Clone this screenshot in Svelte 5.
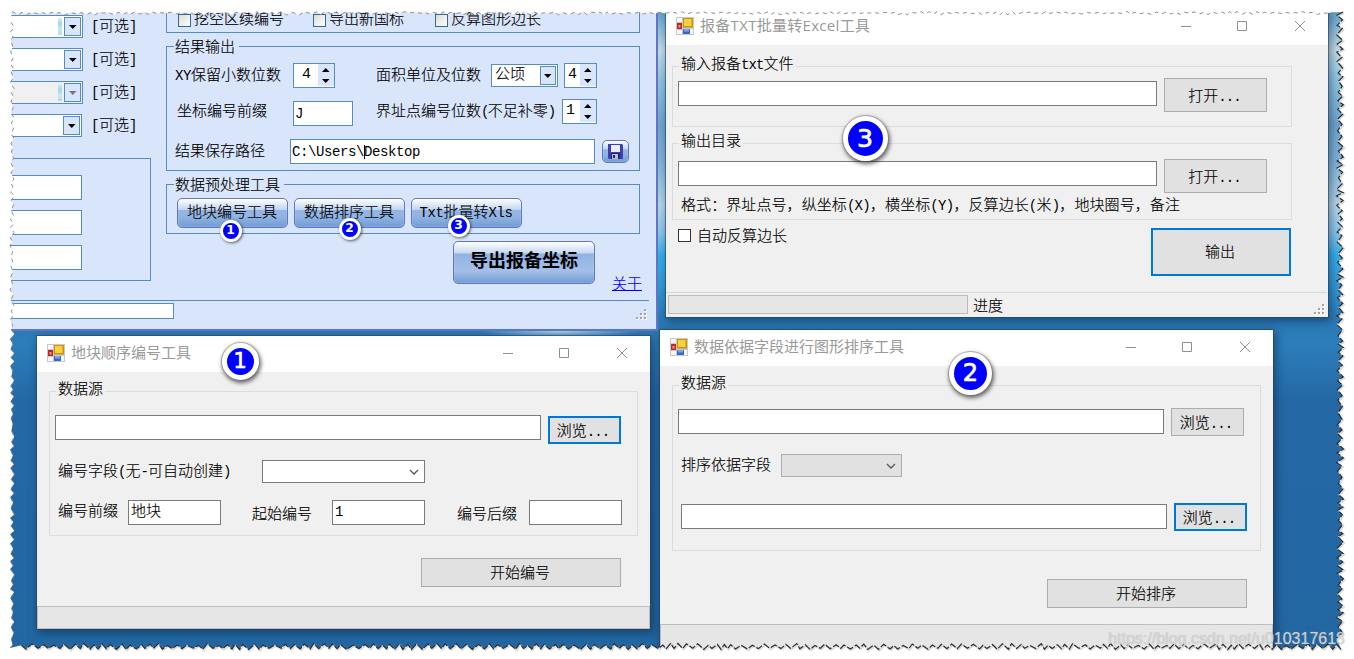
<script>
  let wantSkip = $state(false);
  let wantStandard = $state(false);
  let wantLength = $state(false);
  let autoLength = $state(false);

  let xyDigits = $state(4);
  let areaDigits = $state(4);
  let pointDigits = $state(1);

  const badges = [
    { n: 1, x: 230.5, y: 230.5, size: 22 },
    { n: 2, x: 349.5, y: 228.5, size: 22 },
    { n: 3, x: 458.5, y: 225.5, size: 22 },
    { n: 1, x: 240, y: 361.5, size: 37 },
    { n: 2, x: 970.5, y: 373.5, size: 43 },
    { n: 3, x: 865, y: 138, size: 45 },
  ];

  // splits a label so latin runs can be set half-width
  function runs(text) {
    return text.match(/[\x20-\x7e]+|[^\x20-\x7e]+/g) ?? [];
  }

  let seed = 7;
  function random() {
    seed = (seed * 16807) % 2147483647;
    return seed / 2147483647;
  }

  // zigzag from a to b, teeth between lo and hi
  function teeth(a, b, lo, hi, vertical) {
    const points = [];
    const dir = b > a ? 1 : -1;
    let out = true;
    for (let p = a; (b - p) * dir > 5; p += dir * (3 + random() * 3.5)) {
      const d = out ? lo + (random() * (hi - lo)) / 3 : hi - random() * 2;
      points.push(vertical ? [d, p] : [p, d]);
      out = !out;
    }
    return points;
  }

  const line = (points) =>
    points.map(([x, y]) => x.toFixed(1) + " " + y.toFixed(1)).join("L");

  const topEdge = teeth(12, 1342, 11.5, 15, false);
  const rightEdge = teeth(12, 648, 1343.5, 1338.5, true);
  const bottomEdge = teeth(1341, 12, 649.5, 645.5, false);
  const leftEdge = teeth(648, 14, 10, 14.5, true);
  const tornPage =
    "M0 0H1354V659H0ZM" +
    line([...topEdge, ...rightEdge, ...bottomEdge, ...leftEdge]) +
    "Z";
</script>

{#snippet label(text)}
  {#each runs(text) as run}{#if run.charCodeAt(0) < 127}<span class="en"
        >{run}</span
      >{:else}{run}{/if}{/each}
{/snippet}

{#snippet titlebar(title)}
  <header>
    <svg class="app-icon" viewBox="0 0 18 18" width="18" height="18">
      <rect width="18" height="18" fill="#c9c9c9" />
      <path d="M1 1h5v4H1zM1 13h5v4H1zM14 12h3v5h-3z" fill="#f6f6f6" />
      <rect x="1" y="6" width="5" height="6" fill="#b92a22" />
      <rect x="2.5" y="8" width="2" height="2.5" fill="#ee9a8c" />
      <rect x="7" y="1" width="10" height="9.5" fill="#c9940c" />
      <rect x="8" y="2" width="7.5" height="7" fill="#fbd13b" />
      <rect x="7" y="12" width="7" height="5" fill="#3467cf" />
      <rect x="8" y="12" width="5" height="2.5" fill="#7ba5f0" />
    </svg>
    <h1>{title}</h1>
    <div class="controls">
      <svg width="12" height="12"><path d="M1 6.5H11" /></svg>
      <svg width="12" height="12"><path d="M1.5 1.5h9v9h-9z" /></svg>
      <svg width="12" height="12"><path d="M1 1L11 11M11 1L1 11" /></svg>
    </div>
  </header>
{/snippet}

{#snippet grip()}
  <svg class="grip" width="11" height="11">
    <path
      d="M9 1h2v2h-2zM5 5h2v2h-2zM9 5h2v2h-2zM1 9h2v2h-2zM5 9h2v2h-2zM9 9h2v2h-2z"
      fill="#fff"
    />
    <path
      d="M8 0h2v2h-2zM4 4h2v2h-2zM8 4h2v2h-2zM0 8h2v2h-2zM4 8h2v2h-2zM8 8h2v2h-2z"
      fill="#a3a3a3"
    />
  </svg>
{/snippet}

{#snippet arrow()}
  <span class="drop"
    ><svg width="8" height="4"><path d="M0 0H7.5L3.75 4Z" /></svg></span
  >
{/snippet}

{#snippet arrows()}
  <span class="arrows">
    <svg width="8" height="4"><path d="M0 4H7.5L3.75 0Z" /></svg>
    <svg width="8" height="4"><path d="M0 0H7.5L3.75 4Z" /></svg>
  </span>
{/snippet}

{#snippet chevron()}
  <svg class="chevron" width="10" height="6"><path d="M1 1L5 5L9 1" /></svg>
{/snippet}

<main class="desktop">
  <section class="window export">
    <div class="columns">
      <div class="left">
        {#each [1, 2, 3, 4] as n}
          <div class="optional">
            <div
              class="combo"
              class:glow={n === 1 || n === 3}
              class:disabled={n === 3}
              class:short={n === 4}
            >
              {@render arrow()}
            </div>
            <span>{@render label("[可选]")}</span>
          </div>
        {/each}
        <div class="inputs">
          <div class="box"></div>
          <div class="box"></div>
          <div class="box"></div>
        </div>
      </div>

      <div class="right">
        <div class="checks">
          <label class="c1"
            ><input type="checkbox" bind:checked={wantSkip} />挖空区续编号</label
          >
          <label class="c2"
            ><input type="checkbox" bind:checked={wantStandard} />导出新国标</label
          >
          <label
            ><input type="checkbox" bind:checked={wantLength} />反算图形边长</label
          >
        </div>

        <fieldset class="result">
          <legend>结果输出</legend>
          <div class="row r1">
            <span class="name">{@render label("XY保留小数位数")}</span>
            <div class="spin wide"><b>{xyDigits}</b>{@render arrows()}</div>
            <span class="name area">面积单位及位数</span>
            <div class="combo unit"><b>公顷</b>{@render arrow()}</div>
            <div class="spin"><b>{areaDigits}</b>{@render arrows()}</div>
          </div>
          <div class="row r2">
            <span class="name">坐标编号前缀</span>
            <div class="box prefix"><span class="en">J</span></div>
            <span class="name points"
              >{@render label("界址点编号位数(不足补零)")}</span
            >
            <div class="spin mid"><b>{pointDigits}</b>{@render arrows()}</div>
          </div>
          <div class="row r3">
            <span class="name">结果保存路径</span>
            <div class="box path">
              <span class="en">C:\Users\</span><i></i><span class="en"
                >Desktop</span
              >
            </div>
            <button class="glossy save" aria-label="保存">
              <svg width="15" height="15" viewBox="0 0 15 15">
                <path d="M0 0H14L15 1V15H1L0 14Z" fill="#3b41a8" />
                <rect x="3" y="1" width="9" height="7" fill="#e8edfb" />
                <rect x="3" y="9" width="9" height="6" fill="#23286f" />
                <rect x="4" y="10" width="6" height="5" fill="#b9bfca" />
                <rect x="5" y="11" width="2" height="3" fill="#23286f" />
              </svg>
            </button>
          </div>
        </fieldset>

        <fieldset class="tools">
          <legend>数据预处理工具</legend>
          <div class="row">
            <button class="glossy">地块编号工具</button>
            <button class="glossy">数据排序工具</button>
            <button class="glossy">{@render label("Txt批量转Xls")}</button>
          </div>
        </fieldset>

        <div class="row actions">
          <button class="glossy big">导出报备坐标</button>
          <a href="#about">关于</a>
        </div>
      </div>
    </div>
    <footer>
      <div class="progress"></div>
      {@render grip()}
    </footer>
  </section>

  <section class="window tool txt">
    {@render titlebar("报备TXT批量转Excel工具")}
    <fieldset class="source">
      <legend>{@render label("输入报备txt文件")}</legend>
      <div class="row">
        <div class="box"></div>
        <button>{@render label("打开...")}</button>
      </div>
    </fieldset>
    <fieldset class="target">
      <legend>输出目录</legend>
      <div class="row">
        <div class="box"></div>
        <button>{@render label("打开...")}</button>
      </div>
      <p>
        {@render label(
          "格式：界址点号，纵坐标(X)，横坐标(Y)，反算边长(米)，地块圈号，备注",
        )}
      </p>
    </fieldset>
    <div class="row output">
      <label
        ><input type="checkbox" bind:checked={autoLength} />自动反算边长</label
      >
      <button class="focus">输出</button>
    </div>
    <footer>
      <div class="progress"></div>
      <span>进度</span>
      {@render grip()}
    </footer>
  </section>

  <section class="window tool number">
    {@render titlebar("地块顺序编号工具")}
    <fieldset>
      <legend>数据源</legend>
      <div class="row n1">
        <div class="box"></div>
        <button class="focus">{@render label("浏览...")}</button>
      </div>
      <div class="row n2">
        <span class="name">{@render label("编号字段(无-可自动创建)")}</span>
        <div class="select">{@render chevron()}</div>
      </div>
      <div class="row n3">
        <span class="name">编号前缀</span>
        <div class="box">地块</div>
        <span class="name start">起始编号</span>
        <div class="box"><span class="en">1</span></div>
        <span class="name suffix">编号后缀</span>
        <div class="box"></div>
      </div>
    </fieldset>
    <button class="run">开始编号</button>
    <div class="status"></div>
  </section>

  <section class="window tool sort">
    {@render titlebar("数据依据字段进行图形排序工具")}
    <fieldset>
      <legend>数据源</legend>
      <div class="row s1">
        <div class="box"></div>
        <button>{@render label("浏览...")}</button>
      </div>
      <div class="row s2">
        <span class="name">排序依据字段</span>
        <div class="select disabled">{@render chevron()}</div>
      </div>
      <div class="row s3">
        <div class="box"></div>
        <button class="focus">{@render label("浏览...")}</button>
      </div>
    </fieldset>
    <button class="run">开始排序</button>
    <div class="status"></div>
  </section>

  {#each badges as badge}
    <div
      class="badge"
      class:small={badge.size < 30}
      style="left: {badge.x - badge.size / 2}px; top: {badge.y -
        badge.size / 2}px; width: {badge.size}px; height: {badge.size}px; font-size: {badge.size *
        0.56}px"
    >
      {badge.n}
    </div>
  {/each}

  <svg class="torn" width="1354" height="659">
    <path d={tornPage} fill="#fff" fill-rule="evenodd" />
    <path class="soft" d={"M" + line(topEdge)} />
    <path class="soft" d={"M" + line(leftEdge)} />
    <path class="shade" d={"M" + line(rightEdge)} />
    <path class="shade" d={"M" + line(bottomEdge)} />
    <path class="hard" d={"M" + line(rightEdge)} />
    <path class="hard" d={"M" + line(bottomEdge)} />
  </svg>
  <div class="watermark">https://blog.csdn.net/u010317618</div>
</main>

<style>
  :global(body) {
    margin: 0;
    background: #fff;
    overflow: hidden;
  }

  .desktop {
    position: relative;
    width: 1354px;
    height: 659px;
    overflow: hidden;
    background:
      radial-gradient(
        80px 8px at 560px 331px,
        #a5d3e6,
        rgba(120, 185, 220, 0.6) 60%,
        transparent
      ),
      linear-gradient(
        #5fa5cd 12px,
        #c3dde8 50px,
        #8ec6e2 80px,
        #6fa5cf 125px,
        #7fb2d8 160px,
        #b3d6ea 205px,
        #8cc6ea 232px,
        #35aeea 255px,
        #319bd8 285px,
        #2a79b6 320px,
        #2c7dba 345px,
        #2469a5 400px,
        #2267a2 100%
      );
    font:
      15px "Noto Sans CJK SC",
      sans-serif;
    font-weight: 300;
    -webkit-text-stroke: 0.15px;
    line-height: 15px;
    color: #000;
    --en-gap: -0.9px;
  }

  * {
    box-sizing: border-box;
  }

  .en {
    font-family: "Liberation Mono", monospace;
    font-size: 14px;
    line-height: 0;
    letter-spacing: var(--en-gap);
    -webkit-text-stroke: 0;
  }

  .window {
    position: absolute;
    display: flex;
    flex-direction: column;
    white-space: nowrap;
  }

  .row {
    display: flex;
    align-items: flex-start;
  }

  fieldset {
    margin: 0;
    padding: 0;
    min-width: 0;
    border: 1px solid #dcdcdc;
  }

  legend {
    margin-left: 6px;
    padding: 0 2px 7px;
    line-height: 8px;
  }

  button {
    flex: none;
    padding: 0 2px 2px 0;
    border: 1px solid #adadad;
    background: #e1e1e1;
    font: inherit;
    color: inherit;
    line-height: 15px;
  }

  button.focus {
    border: 2px solid #0078d7;
  }

  .box {
    flex: none;
    height: 25px;
    border: 1px solid #7a7a7a;
    background: #fff;
    padding-left: 2px;
    line-height: 18px;
  }

  label {
    display: flex;
    align-items: center;
  }

  input[type="checkbox"] {
    appearance: none;
    width: 13px;
    height: 13px;
    margin: 0;
    border: 1px solid #333;
    background: #fff;
  }

  /* export window */

  .export {
    left: 0;
    top: 0;
    width: 658px;
    height: 331px;
    background: #d9e5fb;
    border: solid #6375c6;
    border-width: 0 2px 2px 0;
    --en-gap: -0.4px;
  }

  .columns {
    display: flex;
    height: 300px;
  }

  .left {
    width: 166px;
    padding-top: 15px;
    display: flex;
    flex-direction: column;
    gap: 10px;
  }

  .optional {
    display: flex;
    height: 23px;
    line-height: 20px;
  }

  .optional > span {
    margin-left: auto;
    margin-right: 29px;
  }

  .combo {
    display: flex;
    flex: none;
    justify-content: flex-end;
    width: 83px;
    height: 23px;
    padding: 1px;
    border: 1px solid #548dc1;
    background: #fff;
  }

  .combo.short {
    width: 82px;
  }

  .combo.disabled {
    background: #f0f0f0;
  }

  .combo.glow::before {
    content: "";
    width: 4px;
    height: 17px;
    margin: 1px 2px 0 0;
    background: linear-gradient(#d2f0f5, #a5d5ee, #c7e9f6, #a8d9f5);
  }

  .drop {
    display: flex;
    align-items: center;
    justify-content: center;
    width: 17px;
    height: 19px;
    border: 1px solid #548dc1;
    background: #d9e5fb;
  }

  .disabled .drop path {
    fill: #777;
  }

  .inputs {
    display: flex;
    flex-direction: column;
    gap: 10px;
    width: 151px;
    height: 123px;
    margin-top: 11px;
    padding-top: 16px;
    border: 1px solid #548dc1;
  }

  .inputs .box {
    width: 81px;
  }

  .export .box {
    border-color: #548dc1;
    padding-left: 1px;
    line-height: 20px;
  }

  .right {
    width: 474px;
  }

  .checks {
    display: flex;
    height: 33px;
    padding: 7px 0 0 11px;
    border: 1px solid #548dc1;
    border-top: 0;
  }

  .checks label {
    height: 26px;
    gap: 3px;
    line-height: 21px;
    align-items: flex-start;
  }

  .checks input {
    margin-top: 7px;
    border-color: #34689b;
    background: linear-gradient(135deg, #dcdcd5, #fff);
  }

  .checks .c1 {
    width: 135px;
  }

  .checks .c2 {
    width: 122px;
  }

  .export fieldset {
    border-color: #548dc1;
  }

  .export legend {
    margin-left: 7px;
    padding: 0 4px 1px 1px;
    line-height: 14px;
  }

  .result {
    height: 132px;
    margin-top: 6px;
  }

  .result .row {
    padding-left: 8px;
  }

  .r1 {
    margin-top: 9px;
  }

  .r1 .name {
    width: 118px;
    line-height: 22px;
  }

  .r1 .name.area {
    width: 115px;
    margin-left: 41px;
  }

  .spin {
    display: flex;
    width: 33px;
    height: 25px;
    padding: 0;
    border: 1px solid #548dc1;
    background: #fff;
    justify-content: flex-end;
  }

  .spin b {
    flex: 1;
    padding-left: 3px;
    font: 15px "Liberation Mono", monospace;
    line-height: 21px;
    -webkit-text-stroke: 0;
  }

  .spin.wide {
    width: 42px;
  }

  .spin.wide b {
    padding-left: 8px;
  }

  .spin.mid {
    width: 35px;
  }

  .arrows {
    display: flex;
    flex-direction: column;
    align-items: center;
    justify-content: center;
    gap: 7px;
    width: 16px;
    margin-bottom: 1px;
    background: #d9e5fb;
  }

  .unit {
    width: 67px;
    margin: 1px 6px 0 0;
    justify-content: space-between;
  }

  .unit b {
    font-weight: inherit;
    padding-left: 2px;
    line-height: 14px;
  }

  .unit .drop {
    width: 16px;
  }

  .r2 {
    margin-top: 11px;
  }

  .r2 .name {
    width: 116px;
    margin-left: 2px;
    line-height: 22px;
  }

  .r2 .name.points {
    width: 186px;
    margin-left: 23px;
    --en-gap: -1.6px;
  }

  .r2 .prefix {
    width: 60px;
    margin-top: 2px;
  }

  .r3 {
    margin-top: 15px;
  }

  .r2,
  .r1 {
    height: 25px;
  }

  .r3 .name {
    width: 115px;
    line-height: 22px;
  }

  .path {
    width: 305px;
    margin-right: 7px;
  }

  .path i {
    display: inline-block;
    width: 1px;
    height: 14px;
    margin-right: -1px;
    vertical-align: -3px;
    background: #000;
  }

  .glossy {
    border: 1px solid #6375c6;
    border-radius: 5px;
    background: linear-gradient(
      #fff,
      #bfd3f0 39%,
      #94b5e4 41%,
      #93b5e3 60%,
      #719dd6
    );
    box-shadow: inset 0 0 1px #fff;
  }

  .save {
    display: flex;
    align-items: center;
    justify-content: center;
    width: 27px;
    height: 23px;
    margin-top: 1px;
    padding: 0;
  }

  .tools {
    height: 57px;
    margin-top: 6px;
  }

  .tools .row {
    gap: 6px;
    padding: 6px 0 0 10px;
  }

  .tools button {
    width: 111px;
    height: 30px;
    padding: 0 1px 6px 0;
  }

  .actions {
    justify-content: flex-end;
    padding-top: 7px;
  }

  .big {
    width: 142px;
    height: 43px;
    padding: 0 0 7px;
    font-size: 18px;
    font-weight: 700;
    -webkit-text-stroke: 0;
    background: linear-gradient(
      #fff,
      #c6d8f2 27%,
      #91b2e2 29%,
      #a3bfe9 70%,
      #709dd6
    );
  }

  .actions a {
    margin: 34px -2px 0 17px;
    color: #0000f0;
    line-height: 15px;
    text-decoration: none;
    border-bottom: 1px solid #0000f0;
  }

  .export footer {
    display: flex;
    justify-content: space-between;
    width: 649px;
    height: 29px;
    padding: 2px 2px 0 0;
    border-top: 1px solid #548dc1;
  }

  .export .progress {
    width: 174px;
    height: 16px;
    border: 1px solid #548dc1;
    background: #fff;
  }

  .export .grip {
    margin-top: 6px;
  }

  /* tool windows */

  .tool {
    background: #f0f0f0;
    box-shadow:
      0 0 0 1px rgba(45, 65, 85, 0.6),
      2px 3px 9px 1px rgba(0, 20, 50, 0.45);
  }

  header {
    display: flex;
    flex: none;
    height: 36px;
    padding: 8px 0 0 10px;
    background: #fff;
  }

  .app-icon {
    margin-right: 6px;
  }

  h1 {
    flex: 1;
    margin: 0;
    font:
      400 15px "Open Sans",
      "Noto Sans CJK SC",
      sans-serif;
    line-height: 17px;
    color: #999;
    -webkit-text-stroke: 0;
  }

  .txt h1 {
    letter-spacing: 0.3px;
  }

  .controls {
    display: flex;
    height: 19px;
  }

  .controls svg {
    margin: 3px 22.5px;
    stroke: #8f8f8f;
    fill: none;
  }

  .controls svg:nth-child(2) {
    margin: 3px 23px 3px 22px;
  }

  .select {
    display: flex;
    justify-content: flex-end;
    align-items: center;
    height: 23px;
    padding-right: 5px;
    border: 1px solid #7a7a7a;
    background: #fff;
  }

  .select.disabled {
    border-color: #adadad;
    background: #e1e1e1;
  }

  .chevron {
    fill: none;
    stroke: #555;
    stroke-width: 1.3;
  }

  .txt {
    left: 666px;
    top: 9px;
    width: 662px;
    height: 308px;
  }

  .txt fieldset {
    width: 620px;
    margin-left: 6px;
  }

  .txt .source {
    height: 68px;
    margin-top: 14px;
  }

  .txt .target {
    height: 84px;
    margin-top: 9px;
  }

  .txt fieldset .row {
    gap: 7px;
    padding: 4px 0 0 5px;
  }

  .txt .target .row {
    padding-top: 8px;
  }

  .txt .box {
    width: 479px;
    margin-top: 3px;
  }

  .txt .target .box {
    margin-top: 2px;
  }

  .txt fieldset button {
    width: 103px;
    height: 34px;
  }

  p {
    margin: 0 0 0 8px;
    line-height: 21px;
    letter-spacing: 0.08px;
    --en-gap: -0.7px;
  }

  .output {
    justify-content: space-between;
    padding: 8px 37px 0 12px;
  }

  .output label {
    align-items: flex-start;
    gap: 6px;
    height: 14px;
    line-height: 13px;
  }

  .output input {
    margin-top: 1px;
  }

  .output button {
    width: 140px;
    height: 48px;
    padding-bottom: 4px;
  }

  .txt footer {
    display: flex;
    height: 25px;
    margin: auto 1px 0 0;
    padding: 2px 2px 0;
    border-top: 1px solid #d7d7d7;
    line-height: 19px;
  }

  .txt .progress {
    width: 300px;
    height: 19px;
    margin-right: 5px;
    border: 1px solid #bcbcbc;
    background: #e6e6e6;
  }

  .txt .grip {
    margin: 9px 0 0 auto;
  }

  .number {
    left: 37px;
    top: 336px;
    width: 613px;
    height: 293px;
  }

  .number fieldset,
  .sort fieldset {
    width: 589px;
    margin: 12px 0 0 12px;
  }

  .number fieldset {
    height: 152px;
  }

  .n1,
  .s1 {
    gap: 7px;
    padding: 16px 0 0 5px;
  }

  .n1 .box,
  .s1 .box,
  .s3 .box {
    width: 486px;
  }

  .n1 button {
    margin-top: 1px;
  }

  .n1 button,
  .s1 button,
  .s3 button {
    width: 73px;
    height: 28px;
    padding: 0 3px 2px 0;
  }

  .n2 {
    padding: 16px 0 0 8px;
  }

  .n2 .name {
    width: 204px;
    line-height: 19px;
  }

  .n2 .select {
    width: 163px;
  }

  .n3 {
    padding: 17px 0 0 8px;
  }

  .n3 .name {
    width: 70px;
    line-height: 19px;
  }

  .n3 .name.start {
    width: 80px;
    margin-left: 31px;
    line-height: 26px;
  }

  .n3 .name.suffix {
    width: 72px;
    margin-left: 32px;
    line-height: 26px;
  }

  .n3 .box {
    width: 93px;
  }

  .run {
    align-self: flex-end;
    width: 200px;
    height: 29px;
    margin: 22px 29px 0 0;
  }

  .status {
    height: 23px;
    margin-top: auto;
    border: 1px solid #bcbcbc;
    background: #e6e6e6;
  }

  .sort {
    left: 660px;
    top: 330px;
    width: 613px;
    height: 325px;
  }

  .sort fieldset {
    height: 173px;
  }

  .s1 {
    padding-top: 15px;
  }

  .s1 .box,
  .s3 .box {
    margin-top: 1px;
  }

  .s2 {
    padding: 18px 0 0 8px;
  }

  .s2 .name {
    width: 100px;
    line-height: 19px;
  }

  .s2 .select {
    width: 121px;
  }

  .s3 {
    gap: 7px;
    padding: 26px 0 0 8px;
  }

  .sort .run {
    margin: 28px 26px 0 0;
  }

  .sort .status {
    height: 31px;
  }

  .badge {
    position: absolute;
    display: flex;
    align-items: center;
    justify-content: center;
    border: 5px solid #fff;
    border-radius: 50%;
    background: #00f;
    color: #fff;
    font-family: "DejaVu Sans", sans-serif;
    font-weight: 400;
    -webkit-text-stroke: 0.7px #fff;
    box-shadow:
      0 0 0 1px rgba(120, 120, 120, 0.45),
      1px 2px 4px 1px rgba(0, 0, 0, 0.6);
  }

  .badge.small {
    border-width: 3px;
    font-weight: 700;
    -webkit-text-stroke: 0;
    box-shadow: 1px 1px 3px rgba(0, 0, 0, 0.6);
  }

  .torn {
    position: absolute;
    left: 0;
    top: 0;
    fill: none;
  }

  .soft {
    stroke: #8c8c8c;
    stroke-width: 1;
    stroke-dasharray: 4 4;
  }

  .shade {
    stroke: #999;
    stroke-width: 2;
    transform: translate(1px, 1px);
    opacity: 0.35;
  }

  .hard {
    stroke: #2b2b2b;
    stroke-width: 1.2;
    stroke-dasharray: 7 2;
  }

  .watermark {
    position: absolute;
    right: 9px;
    top: 630px;
    font:
      16px "Liberation Sans",
      sans-serif;
    line-height: 18px;
    color: rgba(225, 225, 225, 0.75);
    text-shadow: 0 0 1px #aaa;
    -webkit-text-stroke: 0;
  }
</style>
